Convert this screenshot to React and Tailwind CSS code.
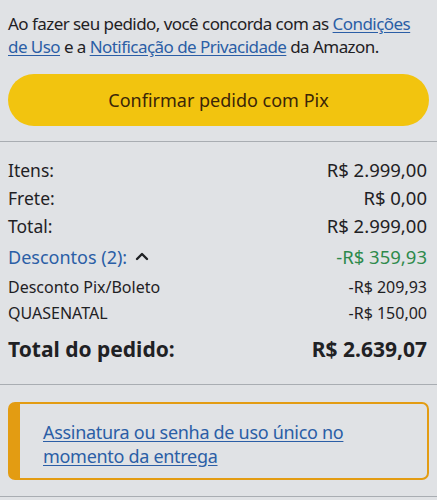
import React from 'react';

const Row = ({ label, value, className = '', valueClass = '' }) => (
    <div className={`flex justify-between items-center ${className}`}>
        <span>{label}</span>
        <span className={valueClass}>{value}</span>
    </div>
);

export default function App() {
    return (
        <div className="w-[437px] h-[500px] overflow-hidden bg-[#e0e2e5] text-[#1f2124]" style={{ fontFamily: '"Noto Sans", "Open Sans", sans-serif' }}>
            <div className="pl-[8px] pr-[6px] pt-[12px] text-[17px] leading-[23px] tracking-[-0.55px]">
                <div className="h-[23px]">
                    Ao fazer seu pedido, você concorda com as{' '}
                    <a className="text-[#2b5ea6] underline underline-offset-2">Condições</a>
                </div>
                <div className="h-[23px]">
                    <a className="text-[#2b5ea6] underline underline-offset-2">de Uso</a> e a{' '}
                    <a className="text-[#2b5ea6] underline underline-offset-2">Notificação de Privacidade</a> da Amazon.
                </div>
            </div>

            <div className="px-[8px] mt-[16px]">
                <button className="w-full h-[52px] rounded-full bg-[#f2c40f] text-[#3b2608] text-[18px]">
                    Confirmar pedido com Pix
                </button>
            </div>

            <div className="mt-[15px] border-t border-[#a9adb2]" />

            <div className="pl-[8px] pr-[10px] pt-[14px] text-[17.5px]">
                <Row label="Itens:" value="R$ 2.999,00" className="h-[28px]" valueClass="text-[18.5px]" />
                <Row label="Frete:" value="R$ 0,00" className="h-[28px]" valueClass="text-[18.5px]" />
                <Row label="Total:" value="R$ 2.999,00" className="h-[28px]" valueClass="text-[18.5px]" />
                <div className="flex justify-between items-center h-[34px]">
                    <span className="flex items-center gap-[8px] text-[#2b5ea6] text-[18px]">
                        Descontos (2):
                        <svg width="14" height="10" viewBox="0 0 14 10" className="mb-[2px]">
                            <path d="M2 8 L7 3 L12 8" fill="none" stroke="#1f2124" strokeWidth="2.4" strokeLinecap="round" strokeLinejoin="round" />
                        </svg>
                    </span>
                    <span className="text-[#2e8a4c] text-[18.5px]">-R$ 359,93</span>
                </div>
                <div className="text-[16px]">
                    <Row label="Desconto Pix/Boleto" value="-R$ 209,93" className="h-[26px]" />
                    <Row label="QUASENATAL" value="-R$ 150,00" className="h-[26px]" />
                </div>
                <div className="flex justify-between items-center h-[48px] text-[21px] font-bold">
                    <span>Total do pedido:</span>
                    <span>R$ 2.639,07</span>
                </div>
            </div>

            <div className="mt-[10px] border-t border-[#a9adb2]" />

            <div className="pl-[8px] pr-[8px] pt-[17px]">
                <div className="h-[78px] rounded-[7px] border-[2px] border-l-[12px] border-[#e39c12] pl-[23px] pt-[16px] text-[18px] leading-[24px] tracking-[-0.3px]">
                    <div className="h-[24px]"><a className="text-[#2b5ea6] underline underline-offset-2">Assinatura ou senha de uso único no</a></div>
                    <div className="h-[24px]"><a className="text-[#2b5ea6] underline underline-offset-2">momento da entrega</a></div>
                </div>
            </div>

            <div className="mt-[16px] border-t border-[#a9adb2]" />
        </div>
    );
}
